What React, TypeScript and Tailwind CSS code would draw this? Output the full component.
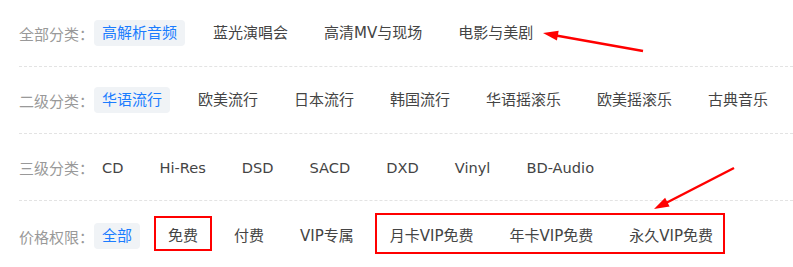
import React from 'react';

type Row = {
  label: string;
  items: string[];
  latin?: boolean;
};

const ROWS: Row[] = [
  { label: '全部分类：', items: ['高解析音频', '蓝光演唱会', '高清MV与现场', '电影与美剧'] },
  { label: '二级分类：', items: ['华语流行', '欧美流行', '日本流行', '韩国流行', '华语摇滚乐', '欧美摇滚乐', '古典音乐'] },
  { label: '三级分类：', items: ['CD', 'Hi-Res', 'DSD', 'SACD', 'DXD', 'Vinyl', 'BD-Audio'], latin: true },
];

function Item({ text, active }: { text: string; active?: boolean }) {
  return (
    <span
      className={
        active
          ? 'flex h-[26px] items-center rounded-[4px] bg-[#f0f3f6] px-2 text-[#1a7cff]'
          : 'flex h-[26px] items-center rounded-[4px] px-2 text-[#444]'
      }
    >
      {text}
    </span>
  );
}

export default function App() {
  return (
    <div className="relative h-[267px] w-[793px] overflow-hidden bg-white pl-[19px] font-['DejaVu_Sans','Noto_Sans_CJK_SC',sans-serif] text-[15px] leading-none">
      {ROWS.map((row) => (
        <div
          key={row.label}
          className="flex h-[67px] items-center border-b border-dashed border-[#e3e3e3]"
        >
          <span className="w-[75px] shrink-0 font-['Noto_Sans_CJK_SC',sans-serif] text-[#999]">{row.label}</span>
          <div className={row.latin ? 'flex items-center gap-5 pt-0.5 text-[14.6px]' : 'flex items-center gap-5'}>
            {row.items.map((item, i) => (
              <Item key={item} text={item} active={i === 0 && !row.latin} />
            ))}
          </div>
        </div>
      ))}

      <div className="flex h-[66px] items-center pt-1">
        <span className="w-[75px] shrink-0 font-['Noto_Sans_CJK_SC',sans-serif] text-[#999]">价格权限：</span>
        <div className="flex items-center gap-5">
          <Item text="全部" active />
          <div className="relative">
            <Item text="免费" />
            <div className="pointer-events-none absolute -top-[7px] -bottom-[2px] -left-[6px] -right-[6px] border-2 border-[#ff0000]" />
          </div>
          <Item text="付费" />
          <Item text="VIP专属" />
          <div className="relative flex items-center gap-5">
            <Item text="月卡VIP免费" />
            <Item text="年卡VIP免费" />
            <Item text="永久VIP免费" />
            <div className="pointer-events-none absolute -top-[10px] -bottom-[5px] -left-[7px] -right-[4px] border-2 border-[#ff0000]" />
          </div>
        </div>
      </div>

      <svg
        className="pointer-events-none absolute left-0 top-0"
        width="793"
        height="267"
        viewBox="0 0 793 267"
      >
        <line x1="643" y1="51" x2="556" y2="35.5" stroke="#ff0000" strokeWidth="2.5" />
        <polygon points="543,33 558.7,30.8 556.9,40.6" fill="#ff0000" />
        <line x1="734" y1="168" x2="666" y2="203" stroke="#ff0000" strokeWidth="2.5" />
        <polygon points="654,209 669.6,206.6 665.1,197.7" fill="#ff0000" />
      </svg>
    </div>
  );
}
